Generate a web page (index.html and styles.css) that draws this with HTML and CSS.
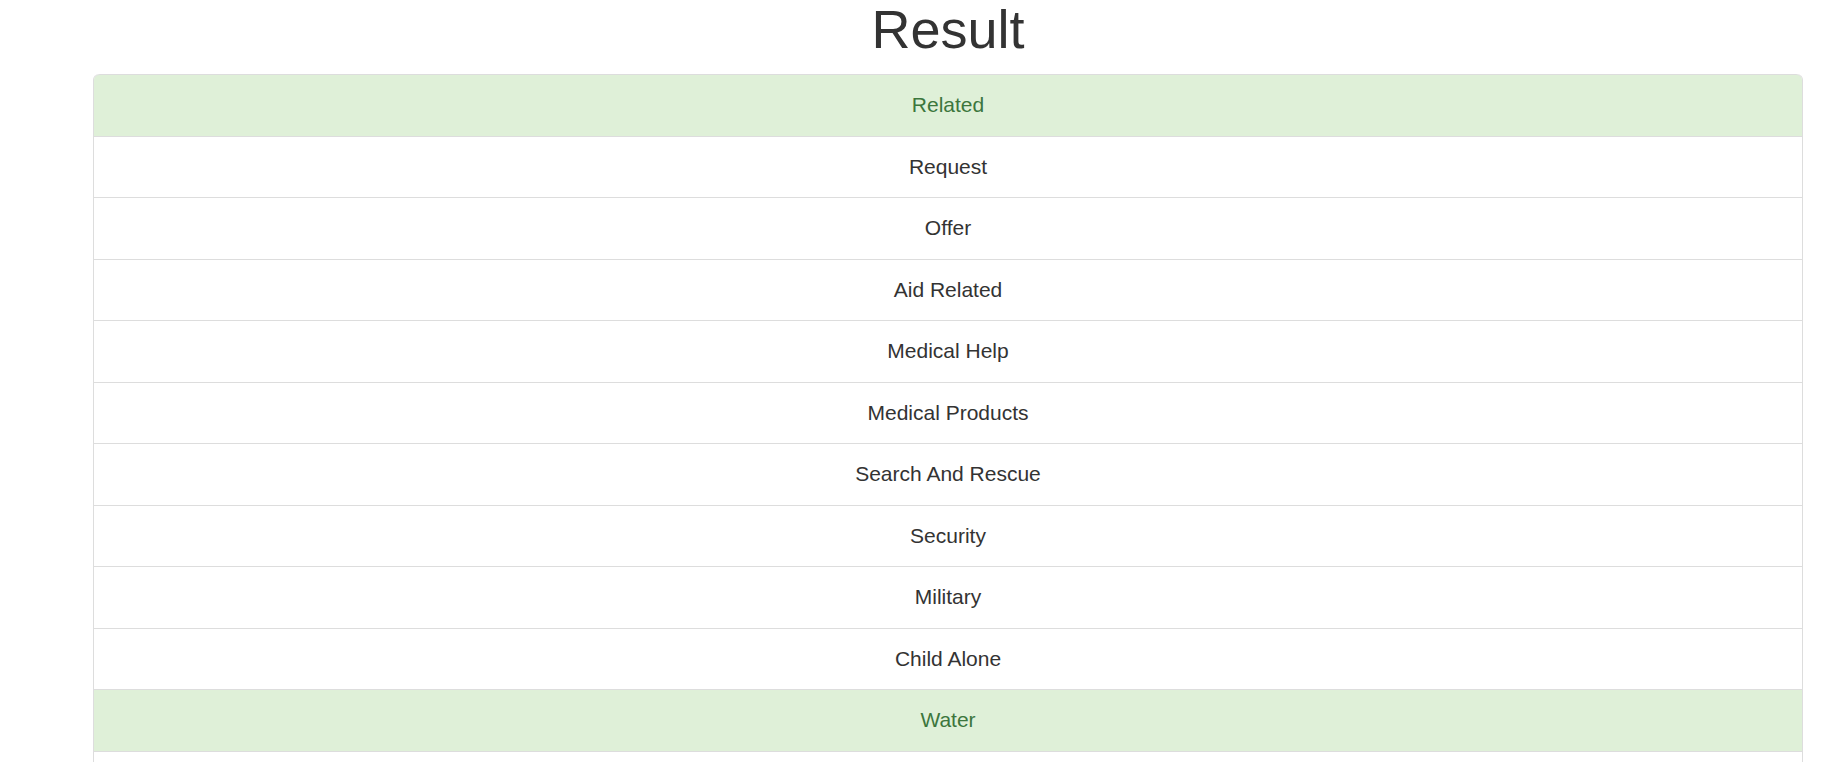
FILE: index.html
```html
<!DOCTYPE html>
<html>
<head>
<meta charset="utf-8">
<title>Result</title>
<link rel="stylesheet" href="styles.css">
</head>
<body>
<div class="page">
  <h1 class="title">Result</h1>
  <ul class="list">
    <li class="item item-success">Related</li>
    <li class="item">Request</li>
    <li class="item">Offer</li>
    <li class="item">Aid Related</li>
    <li class="item">Medical Help</li>
    <li class="item">Medical Products</li>
    <li class="item">Search And Rescue</li>
    <li class="item">Security</li>
    <li class="item">Military</li>
    <li class="item">Child Alone</li>
    <li class="item item-success">Water</li>
    <li class="item">Food</li>
    <li class="item">Shelter</li>
  </ul>
</div>
</body>
</html>
```
FILE: styles.css
```css
html, body {
  margin: 0;
  padding: 0;
  background: #fff;
}
body {
  font-family: "Liberation Sans", Arial, sans-serif;
  color: #333;
  overflow: hidden;
}
.page {
  width: 1710px;
  margin-left: 93px;
}
.title {
  margin: 0 0 19px 0;
  padding-top: 3px;
  font-size: 54px;
  font-weight: 400;
  line-height: 52px;
  text-align: center;
  color: #333;
}
.list {
  list-style: none;
  margin: 0;
  padding: 0;
  border: 1px solid #ddd;
  border-top: none;
  border-radius: 6px;
}
.item {
  padding: 15px 22px;
  font-size: 21px;
  line-height: 30.5px;
  text-align: center;
  border-top: 1px solid #ddd;
  background: #fff;
}
.item:first-child {
  border-top-left-radius: 6px;
  border-top-right-radius: 6px;
}
.item-success {
  background: #dff0d8;
  color: #3c763d;
}
```
